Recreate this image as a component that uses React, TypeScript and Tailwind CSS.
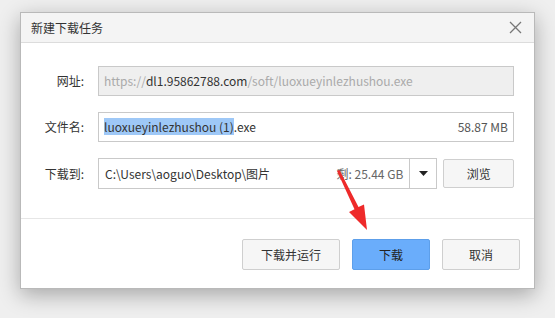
const font = { fontFamily: '"Microsoft YaHei", "Noto Sans CJK SC", sans-serif' };

function Label({ text }: { text: string }) {
  return <div className="w-[69px] shrink-0 text-right pr-[6px] text-[12px] text-[#333]">{text}</div>;
}

function Btn({ text, primary, wide }: { text: string; primary?: boolean; wide?: boolean }) {
  const size = wide ? "w-[98px]" : "w-[78px]";
  return (
    <button
      className={
        primary
          ? size + " h-[31px] rounded-[2px] border border-[#5d9fea] bg-[#6aadfb] text-[12px] text-[#222]"
          : size + " h-[31px] rounded-[2px] border border-[#cfcfcf] bg-[#f6f6f6] text-[12px] text-[#333]"
      }
    >
      {text}
    </button>
  );
}

function App() {
  return (
    <div className="w-[555px] h-[318px] bg-[#efefef] pt-[12px] pl-[20px] overflow-hidden" style={font}>
      <div className="relative w-[515px] h-[277px] bg-white border border-[#b9b9b9] shadow-[0_6px_20px_rgba(0,0,0,0.3)] flex flex-col">
        <div className="h-[30px] bg-[#f4f4f4] border-b border-[#dcdcdc] flex items-center justify-between pl-[10px] pr-[12px]">
          <span className="text-[12px] text-[#333]">新建下载任务</span>
          <svg width="13" height="13" viewBox="0 0 13 13">
            <path d="M1 1L12 12M12 1L1 12" stroke="#777" strokeWidth="1.3" />
          </svg>
        </div>

        <div className="flex flex-col gap-[16px] pt-[23px] pr-[20px]">
          <div className="flex items-center gap-[8px]">
            <Label text="网址:" />
            <div className="flex-1 h-[30px] border border-[#c9c9c9] bg-[#efefef] flex items-center px-[5px] text-[12px] text-[#aaa] whitespace-nowrap overflow-hidden">
              https://<span className="text-[#333]">dl1.95862788.com</span>/soft/luoxueyinlezhushou.exe
            </div>
          </div>

          <div className="flex items-center gap-[8px]">
            <Label text="文件名:" />
            <div className="flex-1 h-[30px] border border-[#c9c9c9] bg-white flex items-center justify-between px-[5px] text-[12px] text-[#333] whitespace-nowrap">
              <span>
                <span className="bg-[#9ec8f7]">luoxueyinlezhushou (1)</span>.exe
              </span>
              <span className="text-[#555]">58.87 MB</span>
            </div>
          </div>

          <div className="flex items-center gap-[8px]">
            <Label text="下载到:" />
            <div className="w-[341px] h-[31px] border border-[#c9c9c9] bg-white flex items-center text-[12px] text-[#333] whitespace-nowrap">
              <div className="flex-1 flex items-center justify-between px-[6px]">
                <span>C:\Users\aoguo\Desktop\图片</span>
                <span className="text-[#666]">剩: 25.44 GB</span>
              </div>
              <div className="w-[27px] h-full border-l border-[#c9c9c9] flex items-center justify-center">
                <svg width="9" height="5" viewBox="0 0 9 5">
                  <path d="M0 0H9L4.5 5Z" fill="#222" />
                </svg>
              </div>
            </div>
            <button className="ml-[-2px] w-[71px] h-[29px] rounded-[2px] border border-[#cfcfcf] bg-[#f6f6f6] text-[12px] text-[#333]">
              浏览
            </button>
          </div>
        </div>

        <div className="mt-[29px] border-t border-[#e6e6e6] flex justify-end gap-[12px] pt-[20px] pr-[14px]">
          <Btn text="下载并运行" wide />
          <Btn text="下载" primary />
          <Btn text="取消" />
        </div>

        <svg className="absolute left-0 top-0 pointer-events-none" width="515" height="277">
          <polygon
            points="316,158 318.5,157 337.5,194 343,191.5 346,217 328,199 333.5,196.2"
            fill="#ee2a2a"
          />
        </svg>
      </div>
    </div>
  );
}

export default App;
